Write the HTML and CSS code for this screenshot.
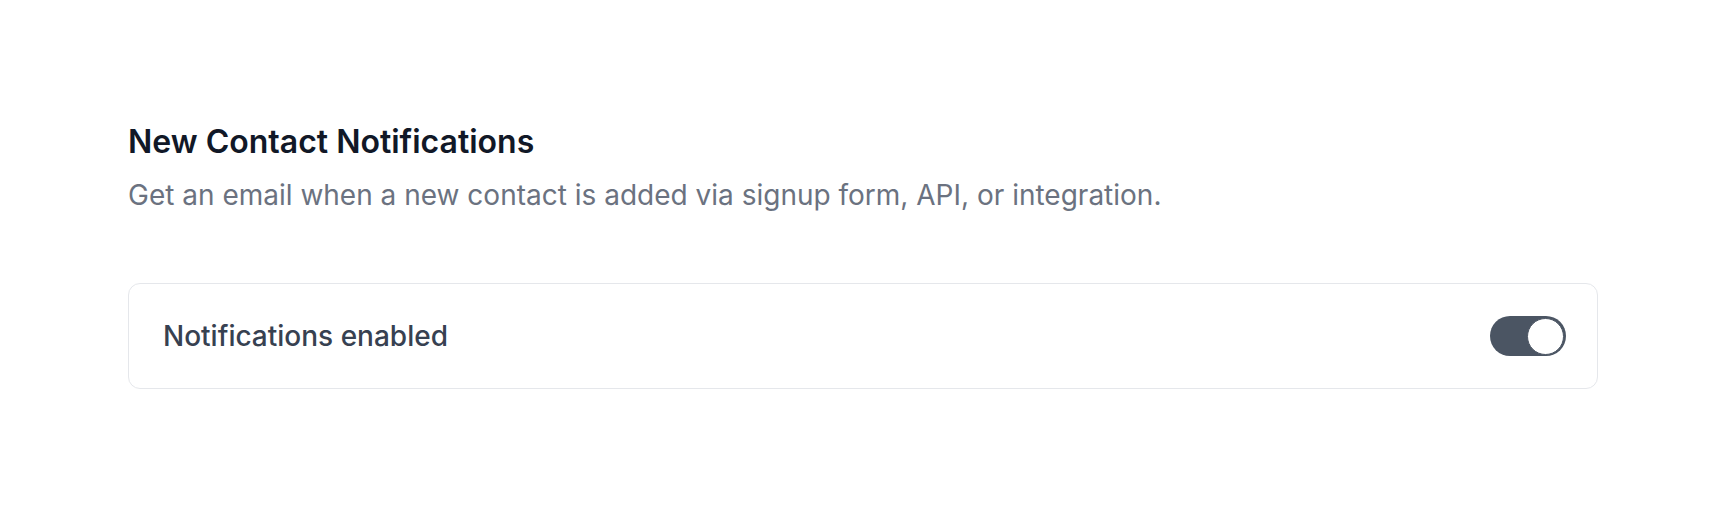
FILE: index.html
```html
<!DOCTYPE html>
<html>
<head>
<meta charset="utf-8">
<link rel="stylesheet" href="styles.css">
</head>
<body>
<main class="page">
  <section class="section">
    <h2 class="title">New Contact Notifications</h2>
    <p class="desc">Get an email when a new contact is added via signup form, API, or integration.</p>
    <div class="card">
      <span class="label">Notifications enabled</span>
      <button class="toggle" type="button" aria-pressed="true"><span class="knob"></span></button>
    </div>
  </section>
</main>
</body>
</html>
```

FILE: styles.css
```css
* { box-sizing: border-box; }
html, body { margin: 0; padding: 0; background: #ffffff; }
body { font-family: Inter, "Noto Sans", sans-serif; }
.page { padding: 122px 130px 0 128px; }
.section { display: flex; flex-direction: column; }
.title { margin: 0; font-size: 32px; line-height: 40px; font-weight: 600; color: #111827; }
.desc { margin: 15px 0 0 0; font-size: 28px; line-height: 36px; font-weight: 400; color: #6b7280; }
.card {
  margin-top: 70px;
  height: 106px;
  border: 1.5px solid #e5e7eb;
  border-radius: 12px;
  display: flex;
  align-items: center;
  justify-content: space-between;
  padding: 0 31px 0 34px;
}
.label { font-size: 28px; font-weight: 500; color: #374151; }
.toggle {
  width: 76px; height: 40px; border-radius: 20px; border: none;
  background: #4b5563; padding: 2px; display: flex; justify-content: flex-end; align-items: center;
}
.knob { width: 37px; height: 37px; border-radius: 50%; background: #fff; border: 1.5px solid #4b5563; }
```
